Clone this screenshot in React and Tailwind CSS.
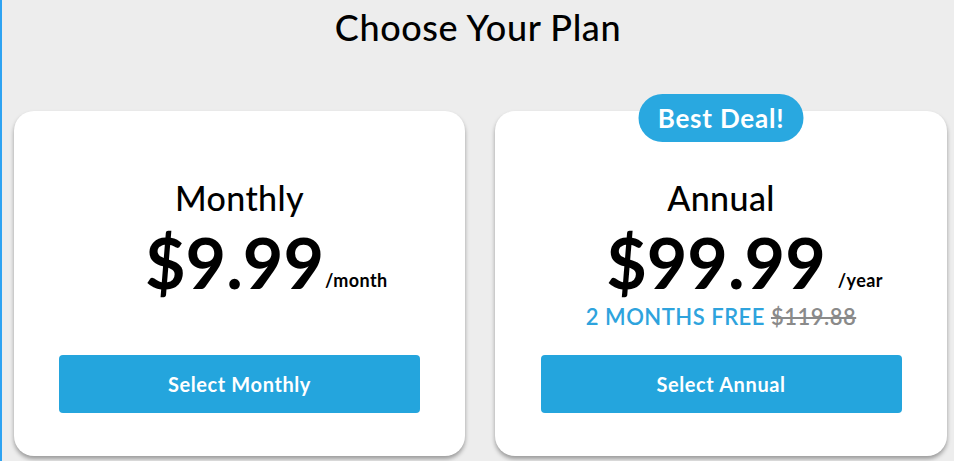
export default function App() {
  return (
    <div className="h-[461px] overflow-hidden bg-[#ededed] border-l-2 border-[#2ea3f2] font-['Lato',sans-serif] text-black">
      <h1 className="pt-[7px] text-center text-[36px] leading-[40px] font-medium tracking-[0.6px]">Choose Your Plan</h1>
      <div className="mt-[64px] grid grid-cols-[451px_452px] gap-[30px] pl-[12px]">
        <div className="relative flex h-[345px] flex-col items-center rounded-[20px] bg-white pt-[67px] shadow-[0_3px_4px_rgba(0,0,0,0.35)]">
          <h2 className="text-[34px] leading-[40px] font-medium tracking-[0.4px]">Monthly</h2>
          <div className="relative mt-[12px] mr-[10px] text-[70px] leading-[64px] font-bold">
            $9.99
            <span className="absolute bottom-[5px] left-full ml-[1px] text-[18px] leading-[18px] font-bold tracking-[0.4px]">/month</span>
          </div>
          <button className="mt-auto mb-[43px] h-[58px] w-[361px] rounded-[4px] bg-[#24a5dd] text-[20px] font-bold tracking-[0.6px] text-white">
            Select Monthly
          </button>
        </div>
        <div className="relative flex h-[345px] flex-col items-center rounded-[20px] bg-white pt-[67px] shadow-[0_3px_4px_rgba(0,0,0,0.35)]">
          <div className="absolute top-[-17px] left-1/2 flex h-[48px] w-[165px] -translate-x-1/2 items-center justify-center rounded-full bg-[#29a8e0] text-[26px] font-bold tracking-[0.8px] text-white">
            Best Deal!
          </div>
          <h2 className="text-[34px] leading-[40px] font-medium tracking-[0.4px]">Annual</h2>
          <div className="relative mt-[12px] mr-[10px] text-[70px] leading-[64px] font-bold">
            $99.99
            <span className="absolute bottom-[5px] left-full ml-[12px] text-[18px] leading-[18px] font-bold tracking-[0.4px]">/year</span>
          </div>
          <div className="mt-[11px] text-[22px] leading-[24px] font-semibold tracking-[0.5px]">
            <span className="text-[#2ea3dd]">2 MONTHS FREE</span>{" "}
            <span className="text-[#8a8a8a] line-through">$119.88</span>
          </div>
          <button className="mt-auto mb-[43px] h-[58px] w-[361px] rounded-[4px] bg-[#24a5dd] text-[20px] font-bold tracking-[0.6px] text-white">
            Select Annual
          </button>
        </div>
      </div>
    </div>
  );
}
